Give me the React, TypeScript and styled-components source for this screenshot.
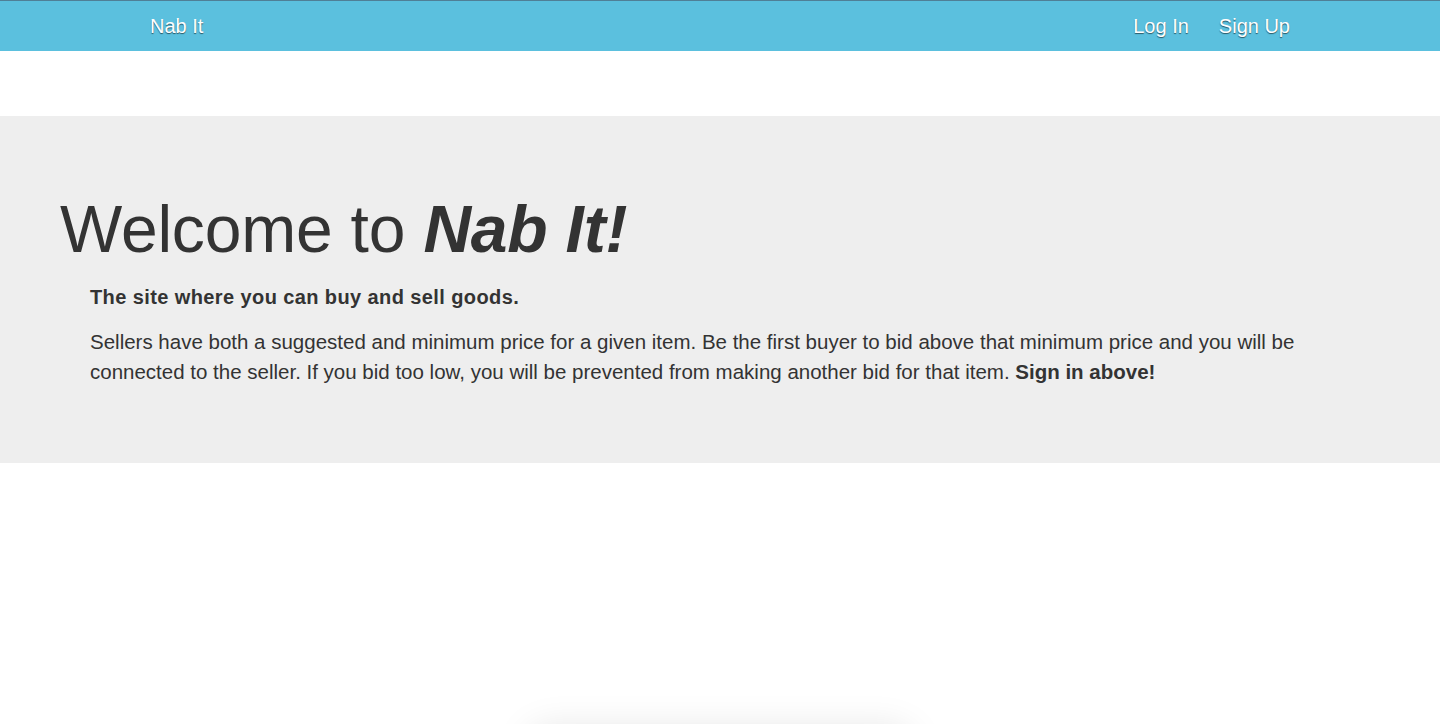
import * as React from "react";
import styled, { createGlobalStyle } from "styled-components";

const GlobalStyle = createGlobalStyle`
  html, body {
    margin: 0;
    padding: 0;
    background: #fff;
    font-family: "Liberation Sans", Arial, Helvetica, sans-serif;
    color: #333;
  }
`;

const Page = styled.div`
  height: 100vh;
  overflow: hidden;
`;

const Navbar = styled.nav`
  height: 50px;
  background: #5bc0de;
  border-top: 1px solid #4f7f96;
`;

const NavContainer = styled.div`
  width: 1170px;
  margin: 0 auto;
  padding: 0 15px;
  box-sizing: border-box;
  height: 100%;
  display: flex;
  align-items: center;
  justify-content: space-between;
`;

const Brand = styled.a`
  color: #fff;
  font-size: 20px;
  text-decoration: none;
  text-shadow: 0 1px 1px rgba(0, 0, 0, 0.55);
`;

const NavLinks = styled.div`
  display: flex;
  gap: 30px;
`;

const NavLink = styled.a`
  color: #fff;
  font-size: 20px;
  text-decoration: none;
  text-shadow: 0 1px 1px rgba(0, 0, 0, 0.55);
`;

const Jumbotron = styled.section`
  margin-top: 65px;
  background: #eee;
  padding: 77px 60px 76px 60px;
`;

const Heading = styled.h1`
  margin: 0;
  font-size: 66px;
  line-height: 1.1;
  font-weight: 400;
  letter-spacing: -0.2px;
  color: #333;

  em {
    font-weight: 700;
  }
`;

const Body = styled.div`
  padding-left: 30px;
`;

const Tagline = styled.h4`
  margin: 20px 0 19px 0;
  font-size: 20px;
  line-height: 1.1;
  font-weight: 700;
  letter-spacing: 0.4px;
`;

const Lead = styled.p`
  margin: 0;
  font-size: 20.5px;
  line-height: 30px;
  font-weight: 400;
  max-width: 1230px;
`;

const Shelf = styled.div`
  width: 380px;
  height: 40px;
  margin: 268px auto 0 auto;
  border-radius: 20px;
  background: #fff;
  box-shadow: 0 0 36px 4px rgba(0, 0, 0, 0.1);
`;

export default function App() {
  return (
    <Page>
      <GlobalStyle />
      <Navbar>
        <NavContainer>
          <Brand href="#">Nab It</Brand>
          <NavLinks>
            <NavLink href="#">Log In</NavLink>
            <NavLink href="#">Sign Up</NavLink>
          </NavLinks>
        </NavContainer>
      </Navbar>
      <Jumbotron>
        <Heading>
          Welcome to <em>Nab It!</em>
        </Heading>
        <Body>
          <Tagline>The site where you can buy and sell goods.</Tagline>
          <Lead>
            Sellers have both a suggested and minimum price for a given item. Be
            the first buyer to bid above that minimum price and you will be
            connected to the seller. If you bid too low, you will be prevented
            from making another bid for that item. <b>Sign in above!</b>
          </Lead>
        </Body>
      </Jumbotron>
      <Shelf />
    </Page>
  );
}
